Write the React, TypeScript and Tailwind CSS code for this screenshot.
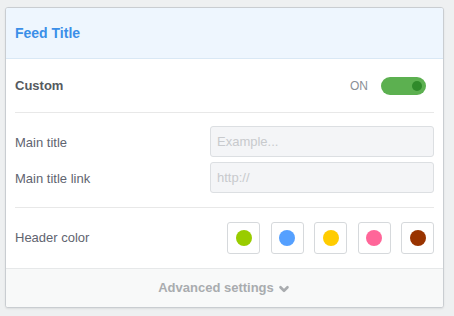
import { ChevronDown } from 'lucide-react';

const SWATCHES = ['#99cc00', '#55a0ff', '#ffcc00', '#ff6699', '#993300'];

export default function App() {
  return (
    <div className="min-h-[316px] w-[454px] bg-[#eef0f1] pt-[7px] pl-[5px] font-['Liberation_Sans',Arial,sans-serif]">
      <div className="w-[439px] overflow-hidden rounded-[3px] border border-[#c9cdd1] bg-white shadow-[0_1px_2px_rgba(0,0,0,0.08)]">
        {/* header */}
        <div className="flex h-[51px] items-center border-b border-[#d9e8f5] bg-[#eef6fe] px-[9px]">
          <span className="text-[14px] font-bold text-[#3b8fe8]">Feed Title</span>
        </div>

        <div className="px-[9px]">
          {/* custom toggle */}
          <div className="flex h-[54px] items-center justify-between border-b border-[#e8e8e8] pt-[1px]">
            <span className="text-[13px] font-bold text-[#555a60]">Custom</span>
            <div className="flex items-center gap-[13px] pr-[8px]">
              <span className="text-[12px] text-[#8a8f96]">ON</span>
              <div className="flex h-[18px] w-[45px] items-center justify-end rounded-full bg-[#5cb050] pr-[4px]">
                <div className="h-[10px] w-[10px] rounded-full bg-[#2f8a2a]" />
              </div>
            </div>
          </div>

          {/* titles */}
          <div className="flex flex-col gap-[5px] border-b border-[#e8e8e8] pt-[13px] pb-[14px]">
            <div className="flex items-center justify-between">
              <span className="pt-[2px] text-[13px] text-[#5f6470]">Main title</span>
              <div className="flex h-[31px] w-[224px] items-center rounded-[3px] border border-[#dcdfe2] bg-[#f4f5f7] px-[6px] text-[13px] text-[#c8cacd]">
                Example...
              </div>
            </div>
            <div className="flex items-center justify-between">
              <span className="pt-[2px] text-[13px] text-[#5f6470]">Main title link</span>
              <div className="flex h-[31px] w-[224px] items-center rounded-[3px] border border-[#dcdfe2] bg-[#f4f5f7] px-[6px] text-[13px] text-[#c8cacd]">
                http://
              </div>
            </div>
          </div>

          {/* header color */}
          <div className="flex h-[60px] items-center justify-between">
            <span className="text-[13px] text-[#5f6470]">Header color</span>
            <div className="flex gap-[10.5px]">
              {SWATCHES.map((c) => (
                <div
                  key={c}
                  className="flex h-[32px] w-[33px] items-center justify-center rounded-[3px] border border-[#d6d9dc] bg-white"
                >
                  <div className="h-[16px] w-[16px] rounded-full" style={{ backgroundColor: c }} />
                </div>
              ))}
            </div>
          </div>
        </div>

        {/* footer */}
        <div className="flex h-[39px] items-center justify-center gap-[3px] border-t border-[#e6e8e9] bg-[#f8f9f9]">
          <span className="text-[13px] font-bold text-[#a9acaf]">Advanced settings</span>
          <ChevronDown size={14} strokeWidth={4.5} className="mt-[1px] text-[#a9acaf]" />
        </div>
      </div>
    </div>
  );
}
